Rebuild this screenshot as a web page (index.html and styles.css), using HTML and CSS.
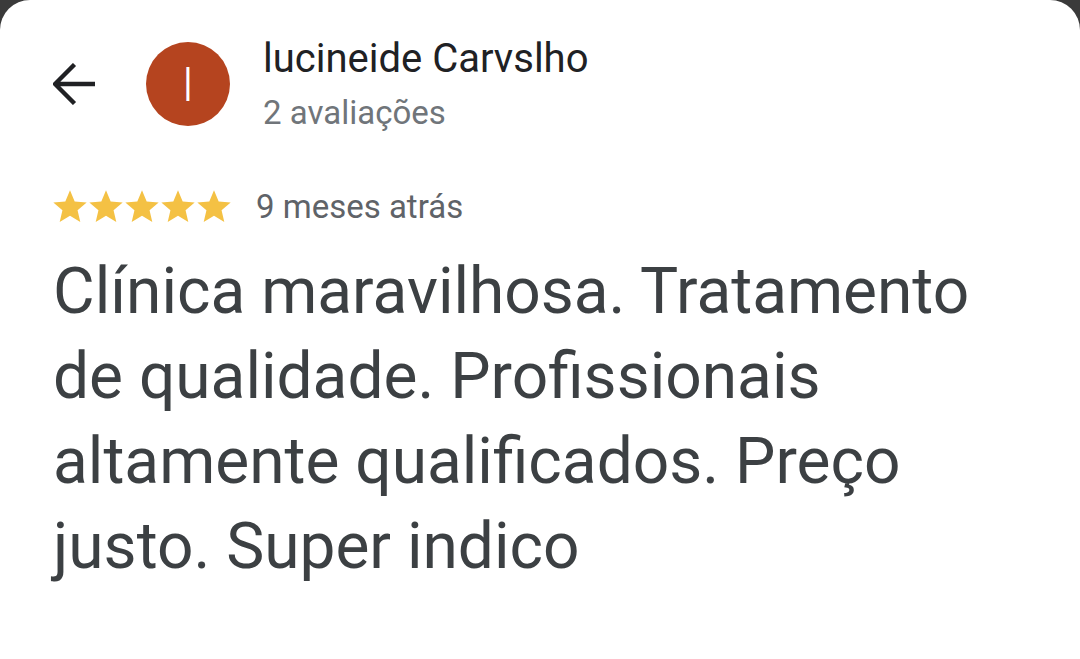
FILE: index.html
```html
<!DOCTYPE html>
<html lang="pt">
<head>
<meta charset="utf-8">
<link rel="stylesheet" href="styles.css">
</head>
<body>
<div class="card">
  <div class="header">
    <svg class="back" width="42" height="42" viewBox="0 0 42 42">
      <path d="M42 21H3M21.5 1.5L2 21l19.5 19.5" fill="none" stroke="#202124" stroke-width="4.4" stroke-linecap="butt" stroke-linejoin="miter"/>
    </svg>
    <div class="avatar">I</div>
    <div class="who">
      <div class="name">lucineide Carvslho</div>
      <div class="count">2 avaliações</div>
    </div>
  </div>
  <div class="rating">
    <div class="stars">
      <svg viewBox="0 0 24 24" class="star"><path d="M12 17.27L18.18 21l-1.64-7.03L22 9.24l-7.19-.61L12 2 9.19 8.63 2 9.24l5.46 4.73L5.82 21z"/></svg>
      <svg viewBox="0 0 24 24" class="star"><path d="M12 17.27L18.18 21l-1.64-7.03L22 9.24l-7.19-.61L12 2 9.19 8.63 2 9.24l5.46 4.73L5.82 21z"/></svg>
      <svg viewBox="0 0 24 24" class="star"><path d="M12 17.27L18.18 21l-1.64-7.03L22 9.24l-7.19-.61L12 2 9.19 8.63 2 9.24l5.46 4.73L5.82 21z"/></svg>
      <svg viewBox="0 0 24 24" class="star"><path d="M12 17.27L18.18 21l-1.64-7.03L22 9.24l-7.19-.61L12 2 9.19 8.63 2 9.24l5.46 4.73L5.82 21z"/></svg>
      <svg viewBox="0 0 24 24" class="star"><path d="M12 17.27L18.18 21l-1.64-7.03L22 9.24l-7.19-.61L12 2 9.19 8.63 2 9.24l5.46 4.73L5.82 21z"/></svg>
    </div>
    <span class="when">9 meses atrás</span>
  </div>
  <p class="review">Clínica maravilhosa. Tratamento<br>de qualidade. Profissionais<br>altamente qualificados. Preço<br>justo. Super indico</p>
</div>
</body>
</html>
```
FILE: styles.css
```css
html, body {
  margin: 0;
  padding: 0;
  background: #3a3a3a;
  height: 100%;
  overflow: hidden;
}
.card {
  background: #ffffff;
  height: 659px;
  border-radius: 30px 30px 0 0;
  font-family: Roboto, "Noto Sans", sans-serif;
  box-sizing: border-box;
  padding: 37px 0 0 53px;
}
.header {
  display: flex;
  align-items: flex-start;
}
.back {
  display: block;
  flex: none;
  width: 42px;
  height: 42px;
  margin-top: 26px;
}
.avatar {
  flex: none;
  width: 84px;
  height: 84px;
  border-radius: 50%;
  background: #b5441f;
  color: #ffffff;
  font-size: 48px;
  font-weight: 300;
  display: flex;
  align-items: center;
  justify-content: center;
  margin-left: 51px;
  margin-top: 5px;
}
.who {
  margin-left: 33px;
}
.name {
  font-size: 40px;
  line-height: 44px;
  color: #202124;
}
.count {
  font-size: 33px;
  line-height: 40px;
  margin-top: 12px;
  color: #70757a;
}
.rating {
  display: flex;
  align-items: center;
  margin-top: 54px;
  height: 40px;
}
.stars {
  display: flex;
  margin-left: -3px;
}
.star {
  flex: none;
  width: 40px;
  height: 40px;
  margin-right: -4px;
  fill: #f4c144;
}
.star:last-child {
  margin-right: 0;
}
.when {
  margin-left: 22px;
  font-size: 33px;
  line-height: 40px;
  color: #5f6368;
}
.review {
  margin: 22px 0 0 0;
  font-size: 64px;
  line-height: 85px;
  color: #3c4043;
}
```
